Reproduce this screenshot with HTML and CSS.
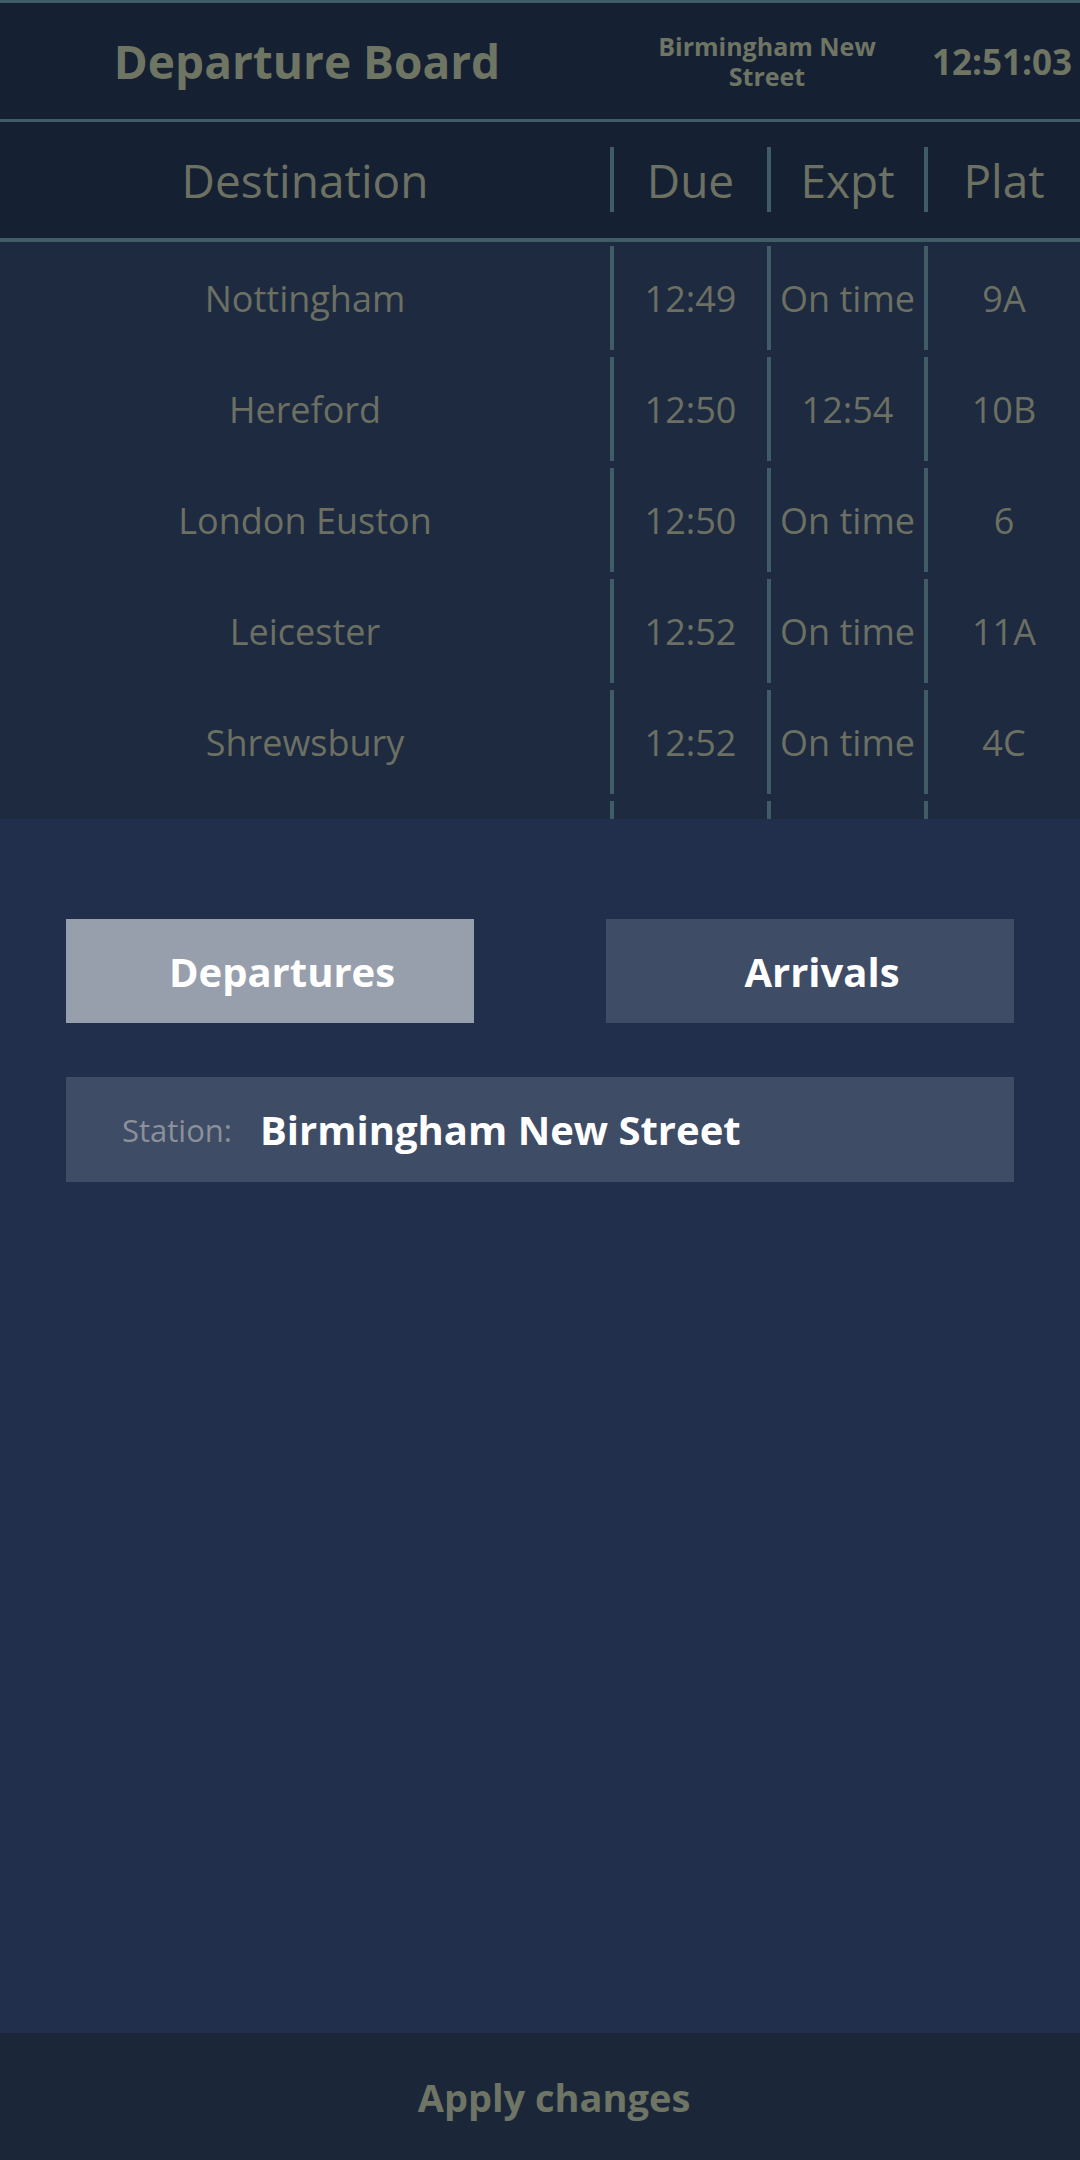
FILE: index.html
```html
<!DOCTYPE html>
<html lang="en">
<head>
<meta charset="utf-8">
<title>Departure Board</title>
<link rel="stylesheet" href="styles.css">
</head>
<body>
<div class="app">
  <div class="board">
    <div class="topbar">
      <div class="title">Departure Board</div>
      <div class="station-name">Birmingham New<br>Street</div>
      <div class="clock">12:51:03</div>
    </div>
    <div class="colhead">
      <div class="hcell">Destination</div>
      <div class="hcell sep">Due</div>
      <div class="hcell sep">Expt</div>
      <div class="hcell sep">Plat</div>
    </div>
    <div class="rows">
      <div class="row"><div class="cell">Nottingham</div><div class="cell sep">12:49</div><div class="cell sep">On time</div><div class="cell sep">9A</div></div>
      <div class="row"><div class="cell">Hereford</div><div class="cell sep">12:50</div><div class="cell sep">12:54</div><div class="cell sep">10B</div></div>
      <div class="row"><div class="cell">London Euston</div><div class="cell sep">12:50</div><div class="cell sep">On time</div><div class="cell sep">6</div></div>
      <div class="row"><div class="cell">Leicester</div><div class="cell sep">12:52</div><div class="cell sep">On time</div><div class="cell sep">11A</div></div>
      <div class="row"><div class="cell">Shrewsbury</div><div class="cell sep">12:52</div><div class="cell sep">On time</div><div class="cell sep">4C</div></div>
      <div class="row"><div class="cell"></div><div class="cell sep"></div><div class="cell sep"></div><div class="cell sep"></div></div>
    </div>
  </div>
  <div class="controls">
    <div class="toggles">
      <div class="btn btn-active">Departures</div>
      <div class="btn">Arrivals</div>
    </div>
    <div class="station-box">
      <span class="station-label">Station:</span>
      <span class="station-value">Birmingham New Street</span>
    </div>
  </div>
  <div class="apply">Apply changes</div>
</div>
</body>
</html>
```
FILE: styles.css
```css
* { box-sizing: border-box; }
html, body {
  margin: 0;
  padding: 0;
  width: 1080px;
  height: 2160px;
  font-family: "Open Sans", "Liberation Sans", sans-serif;
  background: #212f4c;
}
.app {
  display: flex;
  flex-direction: column;
  height: 2160px;
}
.board {
  background: #1e2a40;
  color: #6e7363;
}
.topbar {
  display: grid;
  grid-template-columns: 610px 314px 156px;
  align-items: center;
  height: 122px;
  background: #162033;
  border-top: 3px solid #3f5c67;
  border-bottom: 3px solid #3f5c67;
}
.title {
  text-align: center;
  font-weight: 700;
  font-size: 46px;
  padding-left: 4px;
  color: #6f7563;
}
.station-name {
  text-align: center;
  font-weight: 700;
  font-size: 25px;
  line-height: 30px;
  color: #6f7563;
}
.clock {
  text-align: center;
  font-weight: 700;
  font-size: 35px;
  color: #6f7563;
}
.colhead {
  display: grid;
  grid-template-columns: 610px 157px 157px 156px;
  height: 120px;
  padding: 25px 0 26px;
  background: #162033;
  border-bottom: 4px solid #3f5c67;
}
.hcell {
  display: flex;
  align-items: center;
  justify-content: center;
  font-size: 46px;
  color: #6c7162;
}
.sep { border-left: 4px solid #3f5c67; }
.rows {
  height: 577px;
  overflow: hidden;
}
.row {
  display: grid;
  grid-template-columns: 610px 157px 157px 156px;
  height: 111px;
  padding: 4px 0 3px;
}
.cell {
  display: flex;
  align-items: center;
  justify-content: center;
  font-size: 36px;
  color: #6b7063;
  white-space: nowrap;
}
.controls {
  flex: 1;
  padding: 100px 66px 0;
  display: flex;
  flex-direction: column;
  gap: 54px;
}
.toggles {
  display: flex;
  justify-content: space-between;
}
.btn {
  width: 408px;
  height: 104px;
  display: flex;
  align-items: center;
  justify-content: center;
  padding-left: 24px;
  background: #3e4c66;
  color: #ffffff;
  font-weight: 700;
  font-size: 40px;
}
.btn-active { background: #979fad; }
.station-box {
  height: 105px;
  background: #3e4c66;
  display: flex;
  align-items: center;
  padding-left: 56px;
  gap: 28px;
}
.station-label {
  font-size: 31px;
  color: #8b9099;
}
.station-value {
  font-size: 40px;
  font-weight: 700;
  color: #ffffff;
}
.apply {
  height: 127px;
  background: #1b2739;
  display: flex;
  align-items: center;
  justify-content: center;
  padding-left: 28px;
  font-weight: 700;
  font-size: 38px;
  color: #6f7565;
}
```
